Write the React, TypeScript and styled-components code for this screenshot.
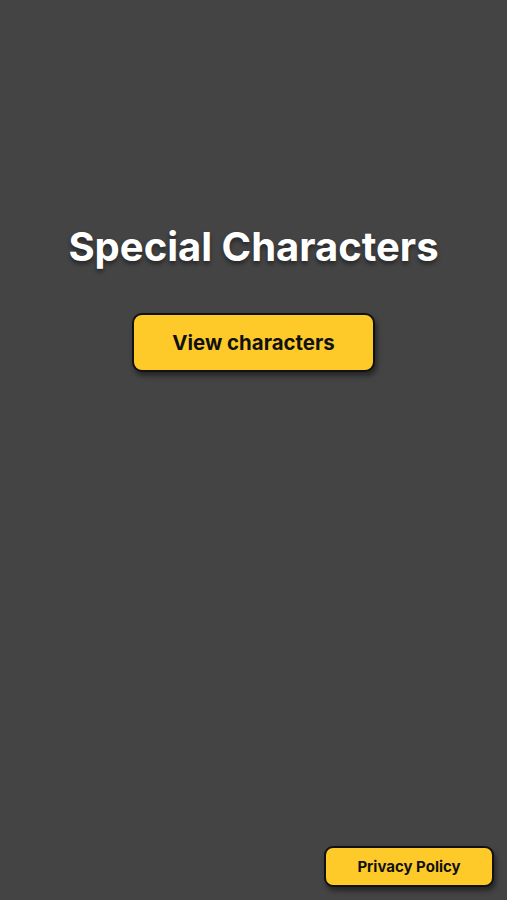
import styled, { createGlobalStyle } from "styled-components";

const GlobalStyle = createGlobalStyle`
  html, body {
    margin: 0;
    padding: 0;
    background: #444444;
  }
  body {
    font-family: Inter, "Noto Sans", sans-serif;
  }
`;

function App() {
  return (
    <StyledScreen>
      <GlobalStyle />
      <StyledMain>
        <StyledTitle>Special Characters</StyledTitle>
        <StyledPrimaryButton type="button">View characters</StyledPrimaryButton>
      </StyledMain>
      <StyledFooter>
        <StyledSmallButton type="button">Privacy Policy</StyledSmallButton>
      </StyledFooter>
    </StyledScreen>
  );
}

export default App;

const StyledScreen = styled.div`
  height: 900px;
  display: flex;
  flex-direction: column;
  background: #444444;
`;

const StyledMain = styled.div`
  display: flex;
  flex-direction: column;
  align-items: center;
  padding-top: 223px;
  gap: 42px;
`;

const StyledTitle = styled.h1`
  margin: 0;
  font-size: 40px;
  line-height: 48px;
  font-weight: 700;
  color: #ffffff;
  text-shadow: 0 3px 4px rgba(0, 0, 0, 0.45);
`;

const StyledPrimaryButton = styled.button`
  width: 243px;
  height: 59px;
  background: #fdca2a;
  border: 2px solid #111111;
  border-radius: 10px;
  box-shadow: 2px 4px 5px rgba(0, 0, 0, 0.45);
  font-family: Inter, "Noto Sans", sans-serif;
  font-size: 20.4px;
  font-weight: 700;
  color: #111111;
  cursor: pointer;
`;

const StyledFooter = styled.div`
  margin-top: auto;
  display: flex;
  justify-content: flex-end;
  padding: 0 13px 13px 0;
`;

const StyledSmallButton = styled.button`
  width: 170px;
  height: 41px;
  background: #fdca2a;
  border: 2px solid #111111;
  border-radius: 9px;
  box-shadow: 2px 4px 5px rgba(0, 0, 0, 0.45);
  font-family: Inter, "Noto Sans", sans-serif;
  font-size: 15px;
  font-weight: 700;
  color: #111111;
  cursor: pointer;
`;
